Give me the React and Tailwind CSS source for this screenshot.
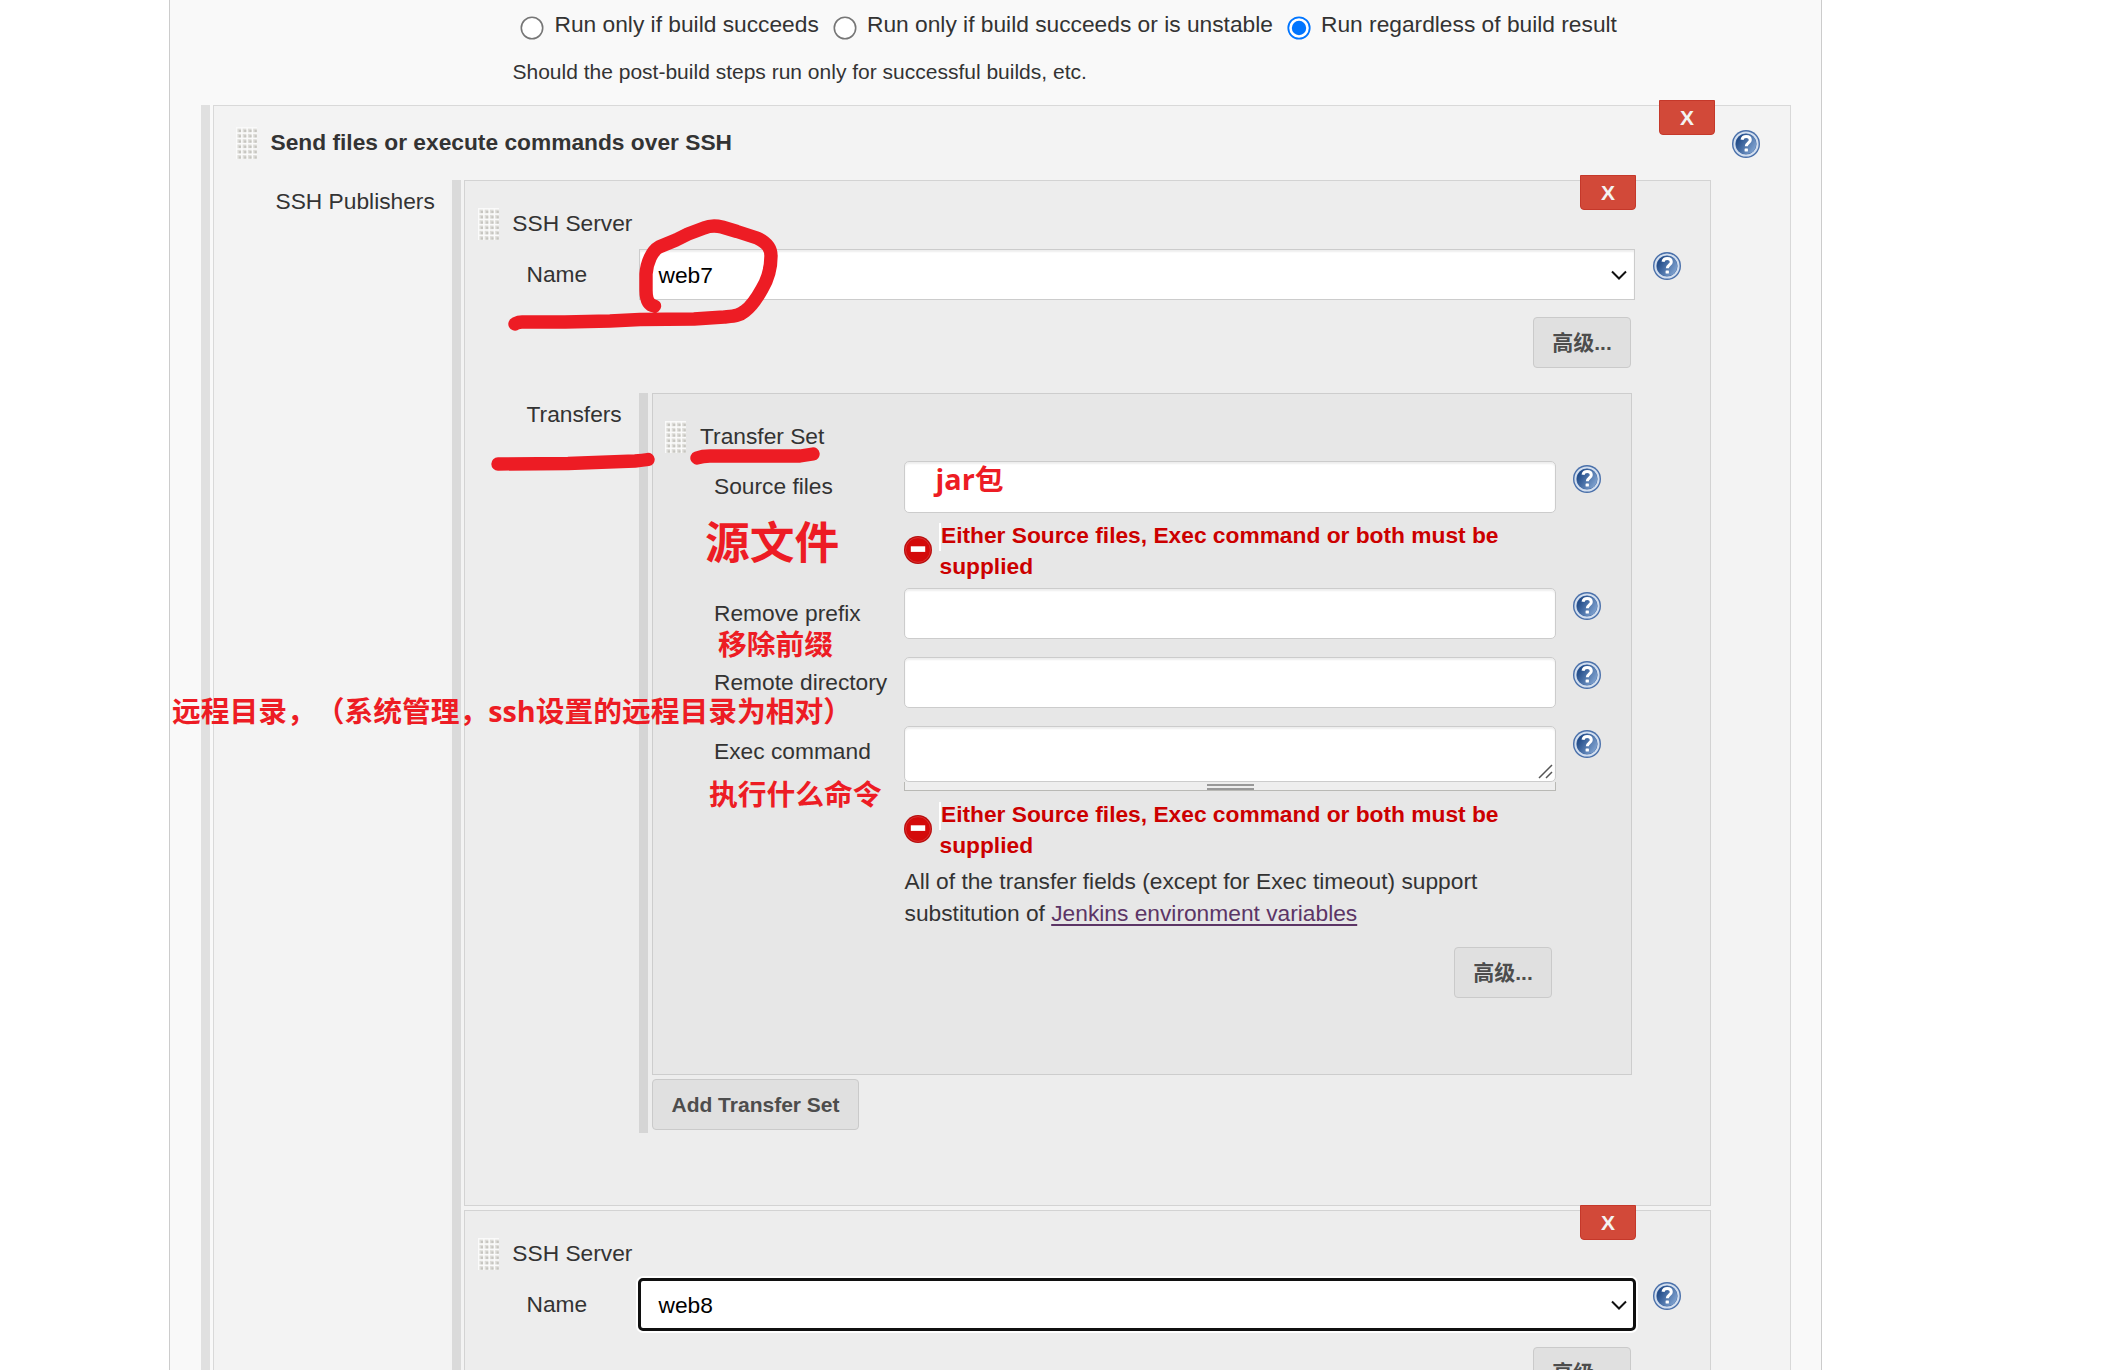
import React from "react";

const INK = "#ed1c24";

function Grip() {
  const cells = [];
  for (let r = 0; r < 6; r++) for (let c = 0; c < 4; c++) cells.push([c * 5.25, r * 5.3]);
  return (
    <svg className="block shrink-0" width="21" height="32" viewBox="0 0 21 32">
      <rect width="21" height="32" fill="#fafafa" />
      {cells.map(([x, y], i) => (
        <g key={i}>
          <rect x={x + 1.4} y={y + 1.6} width="3.7" height="3.7" fill="#dddcd8" />
          <rect x={x + 2.9} y={y + 2.9} width="2.1" height="2.1" fill="#c6c5c0" />
        </g>
      ))}
    </svg>
  );
}

function Help() {
  return (
    <svg className="block shrink-0" width="28" height="28" viewBox="0 0 28 28">
      <defs>
        <linearGradient id="helpFill" x1="0" y1="0.2" x2="1" y2="0.8">
          <stop offset="0.1" stopColor="#204a87" />
          <stop offset="1" stopColor="#86a8d4" />
        </linearGradient>
      </defs>
      <circle cx="14" cy="14" r="14" fill="#4a70aa" />
      <circle cx="14" cy="14" r="11.6" fill="none" stroke="#d3dfef" strokeWidth="2" />
      <circle cx="14" cy="14" r="10.2" fill="url(#helpFill)" />
      <path d="M10 9.800C10.500 7.300 12.200 6.600 14.200 6.600c2.500 0 4.100 1.300 4.100 3.300 0 2.900-4 3-4 6.300" fill="none" stroke="#fff" strokeWidth="3" />
      <rect x="12.6" y="18.4" width="3.3" height="3.2" rx="0.6" fill="#fff" />
    </svg>
  );
}

function ErrorIcon() {
  return (
    <svg className="mt-[13px] block shrink-0" width="28" height="28" viewBox="0 0 28 28">
      <circle cx="14" cy="14" r="14" fill="#b80d0d" />
      <circle cx="14" cy="14" r="12.4" fill="#d40a0a" stroke="#d93030" strokeWidth="1" />
      <rect x="6.8" y="10.3" width="14.4" height="5.6" fill="#fff" />
    </svg>
  );
}

function DeleteButton() {
  return (
    <button className="flex h-[35px] w-[56px] items-center justify-center rounded-b-[4px] border border-[#c5382a] bg-[#d24939] text-[21px] font-bold text-[#f3f3f3]">
      X
    </button>
  );
}

function Button({ children, className = "" }) {
  return (
    <button className={"flex shrink-0 items-center justify-center rounded-[4px] border border-[#cacaca] bg-[#e0e0e0] text-[21px] font-bold text-[#4d4d4d] " + className}>
      {children}
    </button>
  );
}

function Radio({ checked, className = "" }) {
  return (
    <svg className={"block shrink-0 " + className} width="24" height="24" viewBox="0 0 24 24">
      <circle cx="12" cy="12" r="10.7" fill="#fff" stroke={checked ? "#0075ff" : "#767676"} strokeWidth={checked ? 1.8 : 1.6} />
      {checked && <circle cx="12" cy="12" r="7.2" fill="#0075ff" />}
    </svg>
  );
}

function Select({ value, focused }) {
  return (
    <div
      className={
        focused
          ? "-mt-px ml-[-1px] flex h-[53px] w-[998px] items-center rounded-[5px] border-[3px] border-[#101010] bg-white pl-[17.500px] pr-[6px] text-black shadow-[0_0_0_2px_#fff]"
          : "flex h-[51px] w-[996px] items-center border border-[#ccc] bg-white pl-[18.500px] pr-[7px] text-black shadow-[inset_0_2px_2px_rgba(0,0,0,0.07)]"
      }
    >
      <span className="grow leading-[32px]">{value}</span>
      <svg width="16" height="10" viewBox="0 0 16 10">
        <path d="M1 1.500l7 7 7-7" fill="none" stroke="#101010" strokeWidth="2" />
      </svg>
    </div>
  );
}

function FieldRow({ label, className = "", children }) {
  return (
    <div className={"flex items-start " + className}>
      <div className="w-[190px] shrink-0 pt-[9px] leading-[32px]">{label}</div>
      {children}
      <div className="ml-[17px] mt-[4px]">
        <Help />
      </div>
    </div>
  );
}

function Input() {
  return <input className="block h-full w-[652px] rounded-[5px] border border-[#ccc] bg-white shadow-[inset_0_2px_2px_rgba(0,0,0,0.07)]" />;
}

function FieldError({ className = "" }) {
  return (
    <div className={"ml-[190px] flex w-[652px] items-start " + className}>
      <ErrorIcon />
      <div className="relative -mt-[3px] ml-[7.500px] whitespace-nowrap font-bold leading-[30.500px] text-[#c00]">
        <span className="absolute -left-px top-[3px] h-[28px] w-[2px] bg-white" />
        <div className="pl-[1.500px]">Either Source files, Exec command or both must be</div>
        <div>supplied</div>
      </div>
    </div>
  );
}

function ServerHead({ value, focused }) {
  return (
    <>
      <div className="flex h-[68px] items-start pl-[13px] pt-[27px]">
        <Grip />
        <div className="-mt-px ml-[13.300px] leading-[32px]">SSH Server</div>
      </div>
      <div className="flex h-[51px] items-start pl-[61.500px]">
        <div className="w-[112.500px] shrink-0 pt-[9px] leading-[32px]">Name</div>
        <Select value={value} focused={focused} />
        <div className={focused ? "ml-[17px] mt-[3px]" : "ml-[18px] mt-[3px]"}>
          <Help />
        </div>
      </div>
      <div className="mt-[17px] flex pl-[1068px]">
        <Button className="h-[51px] w-[98px]">高级...</Button>
      </div>
    </>
  );
}

function TransferSet() {
  return (
    <div className="h-[682px] w-[980px] border border-[#cdcdcd] bg-[#e7e7e7]">
      <div className="flex h-[67px] items-start pl-[12px] pt-[27px]">
        <Grip />
        <div className="-mt-px ml-[14px] leading-[32px]">Transfer Set</div>
      </div>
      <div className="pl-[61px]">
        <FieldRow label="Source files" className="h-[52px]">
          <Input />
        </FieldRow>
        <FieldError className="mt-[10px] h-[65px]" />
        <FieldRow label="Remove prefix" className="h-[51px]">
          <Input />
        </FieldRow>
        <FieldRow label="Remote directory" className="mt-[18px] h-[51px]">
          <Input />
        </FieldRow>
        <FieldRow label="Exec command" className="mt-[18px] h-[65px]">
          <div className="w-[652px]">
            <div className="flex h-[56px] items-end justify-end rounded-[5px] border border-[#ccc] bg-white p-[2px] shadow-[inset_0_2px_2px_rgba(0,0,0,0.07)]">
              <svg width="15" height="15" viewBox="0 0 15 15">
                <path d="M1 14L14 1M8 14l6-6" stroke="#555" strokeWidth="1.5" />
              </svg>
            </div>
            <div className="flex h-[9px] flex-col items-center gap-[2px] border-x border-b border-[#b9b9b5] bg-[#eee] pt-[2px]">
              <div className="h-[2px] w-[47px] bg-[#999]" />
              <div className="h-[2px] w-[47px] bg-[#999]" />
            </div>
          </div>
        </FieldRow>
        <FieldError className="mt-[11px] h-[63px]" />
        <div className="ml-[190.500px] w-[652px] leading-[32px]">
          <div>All of the transfer fields (except for Exec timeout) support</div>
          <div>
            substitution of <a className="text-[#5c3566] underline decoration-[2px] underline-offset-[3px]">Jenkins environment variables</a>
          </div>
        </div>
        <div className="mt-[18px] flex pl-[740px]">
          <Button className="h-[51px] w-[98px]">高级...</Button>
        </div>
      </div>
    </div>
  );
}

function Server({ value, focused, className = "", children }) {
  return (
    <div className={"relative w-[1247px] border border-[#d3d3d3] bg-[#ededed] " + className}>
      <div className="absolute -top-[6px] left-[1115px]">
        <DeleteButton />
      </div>
      <ServerHead value={value} focused={focused} />
      {children}
    </div>
  );
}

function Note({ className, children }) {
  return (
    <div className={"absolute whitespace-nowrap font-['Open_Sans','Noto_Sans_CJK_SC',sans-serif] font-bold text-[#ed1c24] [text-spacing-trim:space-all] " + className}>
      {children}
    </div>
  );
}

export default function App() {
  return (
    <div className="relative h-[1370px] w-[2113px] overflow-hidden bg-white font-['Liberation_Sans','Noto_Sans_CJK_SC',sans-serif] text-[22.750px] text-[#333]">
      <div className="ml-[169px] h-[1370px] w-[1653px] border-x border-[#ccc] bg-[#f9f9f9]">
        <div className="h-[105px] overflow-hidden">
          <div className="flex h-[56px] items-start pl-[350px] pt-[8px] leading-[32px]">
            <Radio className="mt-[8px]" />
            <span className="ml-[10.500px] w-[268px] whitespace-nowrap">Run only if build succeeds</span>
            <Radio className="ml-[10px] mt-[8px]" />
            <span className="ml-[10.500px] w-[411px] whitespace-nowrap">Run only if build succeeds or is unstable</span>
            <Radio checked className="ml-[9px] mt-[8px]" />
            <span className="ml-[10px] whitespace-nowrap">Run regardless of build result</span>
          </div>
          <div className="pl-[342.500px] text-[21px] leading-[32px]">Should the post-build steps run only for successful builds, etc.</div>
        </div>

        <div className="flex pl-[31px]">
          <div className="h-[1265px] w-[9px] bg-[#e0e0e0]" />
          <div className="relative ml-[3px] h-[1300px] w-[1578px] border border-[#d9d9d9] bg-[#f3f3f3]">
            <div className="absolute -top-[6px] left-[1445px]">
              <DeleteButton />
            </div>
            <div className="flex h-[74px] items-start pl-[21.500px] pt-[21px]">
              <Grip />
              <div className="-mt-px ml-[14px] w-[1461.500px] font-bold leading-[32px]">Send files or execute commands over SSH</div>
              <div className="mt-[3px]">
                <Help />
              </div>
            </div>
            <div className="flex">
              <div className="w-[238px] pl-[61.500px] pt-[5px] leading-[32px]">SSH Publishers</div>
              <div className="h-[1200px] w-[9px] bg-[#dadada]" />
              <div className="ml-[3px]">
                <Server value="web7" className="h-[1026px]">
                  <div className="mt-[25px] flex pl-[61.500px]">
                    <div className="w-[112.500px] pt-[5px] leading-[32px]">Transfers</div>
                    <div className="h-[740px] w-[9px] bg-[#d5d5d5]" />
                    <div className="ml-[4px]">
                      <TransferSet />
                      <Button className="mt-[4px] h-[51px] w-[207px]">Add Transfer Set</Button>
                    </div>
                  </div>
                </Server>
                <Server value="web8" focused className="mt-[4px] h-[300px]" />
              </div>
            </div>
          </div>
        </div>
      </div>

      <svg className="pointer-events-none absolute left-0 top-0" width="2113" height="1370" viewBox="0 0 2113 1370" fill="none" stroke={INK} strokeWidth="13.400" strokeLinecap="round" strokeLinejoin="round">
        <path d="M654.500 306C648 305 646 298 646 290L646 274C647 262 652 251 659 247L676 240L688 234L704 228C711 225 716 225.500 722 227L737 231.500L757 238C768 243 771 249 771 256C771 266 768 279 762 289C757 298 752 306 745 311C739 316 734 316 724 317L694 319L640 319.500L610 321L565 322L522 322C518 322 517 323 515 324" />
        <path d="M498 464L568 463.500L635 461C641 460.500 645 460 648 459.500" />
        <path d="M697 458C701 456.500 706 456 710 456L800 456L813 454" />
      </svg>

      <Note className="left-[935.500px] top-[458.500px] text-[28.800px] leading-[40px]">jar包</Note>
      <Note className="left-[705px] top-[512px] text-[44.700px] leading-[60px]">源文件</Note>
      <Note className="left-[718px] top-[624px] text-[28.750px] leading-[40px]">移除前缀</Note>
      <Note className="left-[172px] top-[691px] text-[28.750px] leading-[40px]">远程目录，（系统管理，ssh设置的远程目录为相对）</Note>
      <Note className="left-[709px] top-[774px] text-[28.750px] leading-[40px]">执行什么命令</Note>
    </div>
  );
}
